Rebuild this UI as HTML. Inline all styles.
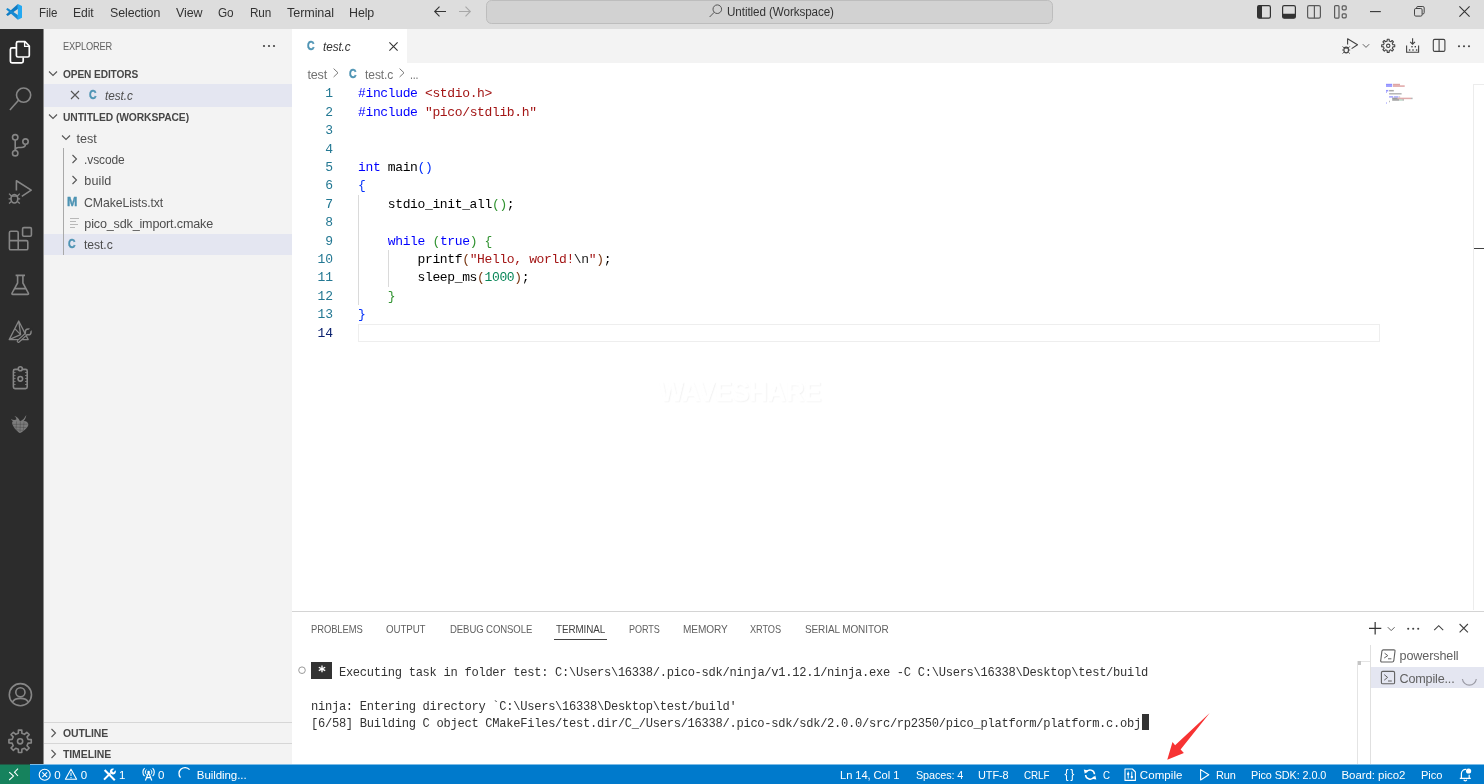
<!DOCTYPE html>
<html>
<head>
<meta charset="utf-8">
<title>test.c - Untitled (Workspace) - Visual Studio Code</title>
<style>
*{box-sizing:border-box;margin:0;padding:0}
html,body{width:1484px;height:784px;overflow:hidden;background:#fff}
body{font-family:"Liberation Sans",sans-serif;font-size:12.5px;color:#333;position:relative;will-change:transform}
.abs{position:absolute}
.t{position:absolute;white-space:pre;line-height:1}
svg{position:absolute;overflow:visible}
/* title bar */
#titlebar{left:0;top:0;width:1484px;height:29px;background:#dddddd;z-index:5}
#titlebar .m{font-size:13px;color:#333;top:6px}
#cmd{left:485.5px;top:0;width:567.5px;height:24px;background:#d2d2d2;border:1px solid #bdbdbd;border-radius:5.5px}
/* activity bar */
#activity{left:0;top:28px;width:44px;height:737px;background:#2c2c2c;border-right:1px solid #8a8a8a}
/* sidebar */
#sidebar{left:44px;top:28px;width:248px;height:737px;background:#f3f3f3}
.row{position:absolute;left:0;width:248px;height:21px}
.sel{background:#e4e6f1}
.hdr{font-weight:bold;font-size:11px;color:#474747}
.lbl{font-size:12.6px;color:#4e4e4e}
.ci{font-size:12.8px;font-weight:bold;color:#4d93b3;transform:scaleX(0.82);transform-origin:0 0;-webkit-text-stroke:0.4px #4d93b3}
/* editor */
#tabs{left:292px;top:28px;width:1192px;height:35px;background:#f3f3f3}
#tab1{left:0;top:0;width:115px;height:35px;background:#fff}
#editor{left:292px;top:63px;width:1192px;height:548px;background:#fff}
.ln{position:absolute;left:0;width:41px;text-align:right;font-family:"Liberation Mono",monospace;font-size:13px;color:#237893;line-height:18.38px;height:18.38px}
.code{position:absolute;left:66px;font-family:"Liberation Mono",monospace;font-size:13px;color:#000;white-space:pre;line-height:18.38px;height:18.38px;letter-spacing:-0.36px}
.k{color:#0000ff}.s{color:#a31515}.n{color:#098658}.b1{color:#0431fa}.b2{color:#319331}.b3{color:#7b3814}.e{color:#1a1a1a}
.bc{font-size:12.6px;color:#727272}
.cur{color:#0b216f}
/* panel */
#panel{left:292px;top:611px;width:1192px;height:154px;background:#fff}
.pt{font-size:10.7px;color:#616161;top:13.4px;margin-left:-0.5px}
.term{position:absolute;left:19px;font-family:"Liberation Mono",monospace;font-size:12.1px;color:#333;white-space:pre;line-height:17px;letter-spacing:-0.283px}
/* status */
#status{left:0;top:764px;width:1484px;height:20px;background:#007acc;color:#fff}
#status .t{font-size:11.5px;color:#fff;top:5.5px}
</style>
</head>
<body>

<!-- TITLE BAR -->
<div id="titlebar" class="abs">
  <svg style="left:5px;top:3px" width="18" height="18" viewBox="5 3 18 18">
    <polygon points="17.86,4.1 17.86,8.93 7.68,15.9 6.07,14.46" fill="#0f7cc4"/>
    <polygon points="17.86,19.8 17.86,15 7.5,8.04 6.07,9.36" fill="#1489d2"/>
    <polygon points="17.86,4.1 22,6.1 22,17.7 17.86,19.8" fill="#23a9f2"/>
  </svg>
  <span class="t m" style="letter-spacing:-0.079px;transform:scaleX(0.8867);transform-origin:0 0;left:39px">File</span>
  <span class="t m" style="letter-spacing:-0.084px;transform:scaleX(0.9334);transform-origin:0 0;left:73.3px">Edit</span>
  <span class="t m" style="letter-spacing:-0.089px;transform:scaleX(0.9529);transform-origin:0 0;left:109.7px">Selection</span>
  <span class="t m" style="letter-spacing:-0.105px;transform:scaleX(0.9588);transform-origin:0 0;left:175.5px">View</span>
  <span class="t m" style="letter-spacing:-0.130px;transform:scaleX(0.9073);transform-origin:0 0;left:218px">Go</span>
  <span class="t m" style="letter-spacing:-0.119px;transform:scaleX(0.9021);transform-origin:0 0;left:249.7px">Run</span>
  <span class="t m" style="letter-spacing:-0.092px;transform:scaleX(0.9692);transform-origin:0 0;left:286.6px">Terminal</span>
  <span class="t m" style="letter-spacing:-0.100px;transform:scaleX(0.9564);transform-origin:0 0;left:349.3px">Help</span>
  <svg style="left:434px;top:6px" width="12" height="11"><path d="M0.7 5.5 H12 M5.5 0.7 L0.7 5.5 L5.5 10.3" fill="none" stroke="#333" stroke-width="1.1"/></svg>
  <svg style="left:459.3px;top:6px" width="12" height="11"><path d="M0 5.5 H11.3 M6.5 0.7 L11.3 5.5 L6.5 10.3" fill="none" stroke="#a8a8a8" stroke-width="1.1"/></svg>
  <div id="cmd" class="abs"></div>
  <svg style="left:708.5px;top:4px" width="14" height="14"><circle cx="8.3" cy="5.2" r="4.3" fill="none" stroke="#555" stroke-width="1"/><path d="M5.2 8.3 L0.6 13" stroke="#555" stroke-width="1"/></svg>
  <span class="t" style="letter-spacing:-0.087px;transform:scaleX(0.9317);transform-origin:0 0;left:726.7px;top:5.5px;font-size:12.5px;color:#333">Untitled (Workspace)</span>
  <!-- layout controls -->
  <svg style="left:1257px;top:5.3px" width="14" height="14"><rect x="0.6" y="0.6" width="12.8" height="12.6" rx="1.6" fill="none" stroke="#333" stroke-width="1.2"/><path d="M0.6 2 Q0.6 0.6 2 0.6 H5 V13.2 H2 Q0.6 13.2 0.6 11.8 Z" fill="#333"/></svg>
  <svg style="left:1282.4px;top:5.3px" width="14" height="14"><rect x="0.6" y="0.6" width="12.8" height="12.6" rx="1.6" fill="none" stroke="#333" stroke-width="1.2"/><path d="M0.6 8.8 H13.4 V11.8 Q13.4 13.2 12 13.2 H2 Q0.6 13.2 0.6 11.8 Z" fill="#333"/></svg>
  <svg style="left:1307.2px;top:5.3px" width="14" height="14"><rect x="0.6" y="0.6" width="12.8" height="12.6" rx="1.6" fill="none" stroke="#5a5a5a" stroke-width="1.2"/><path d="M7.4 0.6 V13.2" stroke="#5a5a5a" stroke-width="1.2"/></svg>
  <svg style="left:1334px;top:5.3px" width="14" height="14"><rect x="0.6" y="0.6" width="4.4" height="12.6" rx="1" fill="none" stroke="#5a5a5a" stroke-width="1.2"/><rect x="8.2" y="0.8" width="4" height="4" rx="1" fill="none" stroke="#5a5a5a" stroke-width="1.2"/><rect x="8.2" y="8.8" width="4" height="4" rx="1" fill="none" stroke="#5a5a5a" stroke-width="1.2"/></svg>
  <!-- window controls -->
  <svg style="left:1370px;top:11px" width="11" height="2"><path d="M0 0.6 H10.8" stroke="#333" stroke-width="1.1"/></svg>
  <svg style="left:1414px;top:6.4px" width="11" height="11"><rect x="0.5" y="2.5" width="7.6" height="7.6" rx="1.3" fill="none" stroke="#444" stroke-width="1"/><path d="M2.6 2.5 V1.8 Q2.6 0.5 3.9 0.5 H8.8 Q10.2 0.5 10.2 1.9 V6.6 Q10.2 8 8.8 8 H8.2" fill="none" stroke="#444" stroke-width="1"/></svg>
  <svg style="left:1458.6px;top:6.4px" width="11" height="11"><path d="M0.4 0.4 L10.6 10.6 M10.6 0.4 L0.4 10.6" stroke="#333" stroke-width="1.1"/></svg>
</div>

<!-- ACTIVITY BAR -->
<div id="activity" class="abs">
  <!-- files (active) : abs coords minus 28 -->
  <svg style="left:0;top:0" width="44" height="737" viewBox="0 28 44 737">
    <g fill="none" stroke="#fff" stroke-width="1.7" stroke-linejoin="round">
      <path d="M16.5 47.8 H12 Q10.4 47.8 10.4 49.4 V61.3 Q10.4 62.9 12 62.9 H21.6 Q23.2 62.9 23.2 61.3 V57.6"/>
      <path d="M18 41.6 H25 L29.3 46 V55.4 Q29.3 57 27.7 57 H18 Q16.4 57 16.4 55.4 V43.2 Q16.4 41.6 18 41.6 Z"/>
      <path d="M24.6 41.8 V46.4 H29.2" stroke-width="1.3"/>
    </g>
    <g fill="none" stroke="#868686" stroke-width="1.6">
      <!-- search -->
      <circle cx="23.6" cy="95.1" r="7.1"/>
      <path d="M18.5 100.2 L9.9 110"/>
      <!-- source control -->
      <circle cx="15.2" cy="137.3" r="2.7"/>
      <circle cx="25.5" cy="141.6" r="2.7"/>
      <circle cx="15.2" cy="153.2" r="2.7"/>
      <path d="M15.2 140 V150.5"/>
      <path d="M25.5 144.3 Q25.5 147.5 21 147.5 H18.5 Q15.6 147.5 15.3 149.8"/>
      <!-- debug -->
      <path d="M16.4 190.5 V180.8 L31.2 190.1 L21.8 196.3" stroke-linejoin="round"/>
      <ellipse cx="14.4" cy="198.8" rx="3.4" ry="4.2"/>
      <path d="M11.2 196.2 H17.6 M11 198.8 H8.6 M17.8 198.8 H20.2 M11.4 196 L9 193.6 M17.4 196 L19.8 193.6 M11.4 201.6 L9 203.6 M17.4 201.6 L19.8 203.6" stroke-width="1.3"/>
      <!-- extensions -->
      <path d="M18.2 240.6 V232.7 Q18.2 231.3 16.8 231.3 H10.8 Q9.4 231.3 9.4 232.7 V248.4 Q9.4 249.8 10.8 249.8 H26.4 Q27.8 249.8 27.8 248.4 V242 Q27.8 240.6 26.4 240.6 H9.4 M18.2 240.6 V249.8"/>
      <rect x="22.6" y="227.6" width="8.8" height="8.6" rx="1.2"/>
      <!-- flask -->
      <path d="M15.6 275.4 H25 M17.6 275.6 V283 L12 293.2 Q11.6 294.4 12.8 294.4 H27.6 Q28.8 294.4 28.4 293.2 L22.9 283 V275.6 M14.3 288.6 H26.2"/>
      <!-- cmake tools -->
      <path d="M18.7 321 L9.2 339.6 H28.2 Z M18.7 321 L20.6 334.6 L9.2 339.6 M20.6 334.6 L14.8 328.6" stroke-width="1.3" stroke-linejoin="round"/>
      <path d="M18.4 341.2 L26.2 334" stroke-width="3.4" stroke-linecap="round"/><path d="M18.4 341.2 L26.4 333.8" stroke="#2c2c2c" stroke-width="1.1" stroke-linecap="round"/>
      <circle cx="28.2" cy="331.9" r="2.9" fill="#2c2c2c" stroke-width="1.4"/><path d="M28.6 331.5 L31.8 328.3" stroke="#2c2c2c" stroke-width="2.4"/><path d="M28.6 331.5 L26.2 334" stroke="#2c2c2c" stroke-width="1.1"/>
      <!-- clipboard -->
      <rect x="13.4" y="369.4" width="13.8" height="19.2" rx="1.6"/>
      <circle cx="20.3" cy="368.8" r="2" fill="#2c2c2c"/>
      <circle cx="20.3" cy="378.8" r="2.3"/>
      <path d="M13.6 372.5 h2 M13.6 375.5 h2 M13.6 378.5 h2 M13.6 381.5 h2 M13.6 384.5 h2 M27 372.5 h-2 M27 375.5 h-2 M27 378.5 h-2 M27 381.5 h-2 M27 384.5 h-2" stroke-width="0.8"/>
      <!-- account -->
      <circle cx="20.4" cy="694.7" r="11.1"/>
      <circle cx="20.4" cy="692.3" r="4.6"/>
      <path d="M12.4 702.2 Q14.2 698.4 20.4 698.4 Q26.6 698.4 28.4 702.2"/>
      <!-- gear -->
      <path d="M18.32 733.30 L18.43 730.12 L21.77 730.12 L21.88 733.30 L24.50 734.38 L26.82 732.22 L29.18 734.58 L27.02 736.90 L28.10 739.52 L31.28 739.63 L31.28 742.97 L28.10 743.08 L27.02 745.70 L29.18 748.02 L26.82 750.38 L24.50 748.22 L21.88 749.30 L21.77 752.48 L18.43 752.48 L18.32 749.30 L15.70 748.22 L13.38 750.38 L11.02 748.02 L13.18 745.70 L12.10 743.08 L8.92 742.97 L8.92 739.63 L12.10 739.52 L13.18 736.90 L11.02 734.58 L13.38 732.22 L15.70 734.38 Z" stroke-linejoin="round"/>
      <circle cx="20.1" cy="741.3" r="2.6"/>
    </g>
    <!-- raspberry -->
    <g fill="#7c7c7c" stroke="none">
      <path d="M12.1 423 Q11.8 420.9 14 420.7 L24.6 420.9 Q28.6 421.8 28.3 425 Q27.6 428.2 21.2 432.6 Q20 433.3 18.8 432.4 Q12.8 427.6 12.1 423 Z"/>
      <path d="M20 421.4 Q18.6 417.4 14.4 416 Q16.8 417.8 16.4 419.6 Q13.6 420.4 10.9 419 Q12.4 421.8 16.6 422 Z"/>
      <path d="M20.2 421.4 Q24.2 419.4 26.3 415 Q25.8 420.2 22 422 Z"/>
    </g>
    <g stroke="#2c2c2c" stroke-width="0.55" fill="none" opacity="0.5">
      <path d="M13 424.4 L27.6 424.2 M13.8 427 L26.4 427.6 M16.2 429.8 L23.6 430.4 M16.6 421.4 L16 429.6 M20.4 421.4 L20 432.4 M24 421.6 L23.4 430.4"/>
    </g>
  </svg>
</div>

<!-- SIDEBAR -->
<div id="sidebar" class="abs">
  <span class="t" style="letter-spacing:-0.213px;transform:scaleX(0.8400);transform-origin:0 0;left:19px;top:13px;font-size:11px;color:#616161">EXPLORER</span>
  <svg style="left:218px;top:16px" width="14" height="4"><circle cx="2" cy="2" r="1.1" fill="#424242"/><circle cx="7" cy="2" r="1.1" fill="#424242"/><circle cx="12" cy="2" r="1.1" fill="#424242"/></svg>
  <!-- open editors -->
  <svg style="left:4px;top:42px" width="10" height="8"><path d="M1 1.5 L5 5.5 L9 1.5" fill="none" stroke="#555" stroke-width="1.1"/></svg>
  <span class="t hdr" style="letter-spacing:-0.104px;transform:scaleX(0.9205);transform-origin:0 0;left:19px;top:41px">OPEN EDITORS</span>
  <div class="row sel" style="top:56px;height:23px"></div>
  <svg style="left:25.7px;top:62.3px" width="10" height="10"><path d="M1 1 L9 9 M9 1 L1 9" fill="none" stroke="#555" stroke-width="1.1"/></svg>
  <span class="t ci" style="left:45.2px;top:61.2px">C</span>
  <span class="t lbl" style="letter-spacing:-0.075px;transform:scaleX(0.9340);transform-origin:0 0;left:61.3px;top:61.7px;font-style:italic">test.c</span>
  <!-- workspace -->
  <svg style="left:4px;top:85px" width="10" height="8"><path d="M1 1.5 L5 5.5 L9 1.5" fill="none" stroke="#555" stroke-width="1.1"/></svg>
  <span class="t hdr" style="letter-spacing:-0.103px;transform:scaleX(0.9358);transform-origin:0 0;left:19px;top:84px">UNTITLED (WORKSPACE)</span>
  <svg style="left:17px;top:106px" width="10" height="8"><path d="M1 1.5 L5 5.5 L9 1.5" fill="none" stroke="#555" stroke-width="1.1"/></svg>
  <span class="t lbl" style="letter-spacing:-0.028px;left:32.5px;top:104.6px">test</span>
  <div class="abs" style="left:19px;top:120px;width:1px;height:107px;background:#a9a9a9"></div>
  <svg style="left:27px;top:126px" width="8" height="10"><path d="M1.5 1 L5.5 5 L1.5 9" fill="none" stroke="#555" stroke-width="1.1"/></svg>
  <span class="t lbl" style="letter-spacing:-0.093px;transform:scaleX(0.9519);transform-origin:0 0;left:40.3px;top:126px">.vscode</span>
  <svg style="left:27px;top:147px" width="8" height="10"><path d="M1.5 1 L5.5 5 L1.5 9" fill="none" stroke="#555" stroke-width="1.1"/></svg>
  <span class="t lbl" style="letter-spacing:0.118px;left:40.3px;top:147.2px">build</span>
  <span class="t" style="left:23.1px;top:166.8px;font-size:13.4px;font-weight:bold;color:#4d93b3;-webkit-text-stroke:0.4px #4d93b3;transform:scaleX(0.93);transform-origin:0 0">M</span>
  <span class="t lbl" style="letter-spacing:-0.088px;transform:scaleX(0.9735);transform-origin:0 0;left:40.3px;top:168.7px">CMakeLists.txt</span>
  <svg style="left:26px;top:190px" width="10" height="10"><path d="M0 0.5 H9 M0 3.5 H6 M0 6.5 H8 M0 9.5 H5" stroke="#b8b8b8" stroke-width="1"/></svg>
  <span class="t lbl" style="letter-spacing:-0.171px;left:40.3px;top:190px">pico_sdk_import.cmake</span>
  <div class="row sel" style="top:206px;height:21px"></div>
  <div class="abs" style="left:19px;top:206px;width:1px;height:21px;background:#a9a9a9"></div>
  <span class="t ci" style="left:23.8px;top:210.2px">C</span>
  <span class="t lbl" style="letter-spacing:-0.075px;transform:scaleX(0.9677);transform-origin:0 0;left:40.3px;top:211.2px">test.c</span>
  <!-- outline / timeline -->
  <div class="abs" style="left:0;top:694px;width:248px;height:1px;background:#d6d6d6"></div>
  <svg style="left:6px;top:700px" width="8" height="10"><path d="M1.5 1 L5.5 5 L1.5 9" fill="none" stroke="#555" stroke-width="1.1"/></svg>
  <span class="t hdr" style="letter-spacing:-0.103px;transform:scaleX(0.9483);transform-origin:0 0;left:19px;top:700px">OUTLINE</span>
  <div class="abs" style="left:0;top:715px;width:248px;height:1px;background:#d6d6d6"></div>
  <svg style="left:6px;top:721px" width="8" height="10"><path d="M1.5 1 L5.5 5 L1.5 9" fill="none" stroke="#555" stroke-width="1.1"/></svg>
  <span class="t hdr" style="letter-spacing:-0.096px;transform:scaleX(0.9511);transform-origin:0 0;left:19px;top:721px">TIMELINE</span>
</div>

<!-- TABS -->
<div id="tabs" class="abs">
  <div id="tab1" class="abs"></div>
  <span class="t ci" style="left:14.8px;top:11.9px">C</span>
  <span class="t" style="letter-spacing:-0.075px;transform:scaleX(0.9306);transform-origin:0 0;left:31px;top:12.5px;font-size:12.6px;font-style:italic;color:#333">test.c</span>
  <svg style="left:97px;top:13.8px" width="9" height="9"><path d="M0.4 0.4 L8.6 8.6 M8.6 0.4 L0.4 8.6" stroke="#333" stroke-width="1.1"/></svg>
  <!-- editor actions : coords relative to tabs (x-292, y-28) -->
  <svg style="left:0;top:0" width="1192" height="35" viewBox="292 28 1192 35">
    <g fill="none" stroke="#424242" stroke-width="1.1">
      <path d="M1347.6 44.4 V38.7 L1357.5 44.7 L1351.6 48.6" stroke-linejoin="round"/>
      <ellipse cx="1346.2" cy="50" rx="2.3" ry="2.9"/>
      <path d="M1344 48.2 H1348.4 M1343.8 50 H1342.2 M1348.6 50 H1350.2 M1344.2 48 L1342.6 46.4 M1348.2 48 L1349.8 46.4 M1344.2 52 L1342.6 53.6 M1348.2 52 L1349.8 53.6" stroke-width="0.9"/>
      <path d="M1362.8 44.2 L1366 47.4 L1369.2 44.2" stroke="#616161" stroke-width="1"/>
      <path d="M1387.16 41.11 L1387.22 39.27 L1389.18 39.27 L1389.24 41.11 L1390.78 41.75 L1392.13 40.49 L1393.51 41.87 L1392.25 43.22 L1392.89 44.76 L1394.73 44.82 L1394.73 46.78 L1392.89 46.84 L1392.25 48.38 L1393.51 49.73 L1392.13 51.11 L1390.78 49.85 L1389.24 50.49 L1389.18 52.33 L1387.22 52.33 L1387.16 50.49 L1385.62 49.85 L1384.27 51.11 L1382.89 49.73 L1384.15 48.38 L1383.51 46.84 L1381.67 46.78 L1381.67 44.82 L1383.51 44.76 L1384.15 43.22 L1382.89 41.87 L1384.27 40.49 L1385.62 41.75 Z" stroke-linejoin="round"/>
      <circle cx="1388.2" cy="45.8" r="1.7"/>
      <path d="M1406.6 45.6 V52.3 H1418.6 V45.6"/>
      <path d="M1412.6 38.2 V44.2 M1410.2 41.8 L1412.6 44.2 L1415 41.8"/>
      <rect x="1433.3" y="39.4" width="11.6" height="12" rx="1.4"/>
      <path d="M1439.1 39.4 V51.4"/>
    </g>
    <g fill="#424242">
      <rect x="1411.3" y="46" width="1.4" height="1.4"/><rect x="1414.6" y="46" width="1.4" height="1.4"/><rect x="1408.9" y="49.3" width="1.4" height="1.4"/><rect x="1412.3" y="49.3" width="1.4" height="1.4"/><rect x="1415.9" y="49.3" width="1.4" height="1.4"/>
      <circle cx="1459" cy="46.2" r="1.05"/><circle cx="1464" cy="46.2" r="1.05"/><circle cx="1469" cy="46.2" r="1.05"/>
    </g>
  </svg>
</div>

<!-- EDITOR -->
<div id="editor" class="abs">
  <span class="t bc" style="letter-spacing:-0.203px;left:15.5px;top:5.7px">test</span>
  <svg style="left:41px;top:5.4px" width="6" height="10"><path d="M0.6 0.6 L5 4.8 L0.6 9" fill="none" stroke="#7a7a7a" stroke-width="1"/></svg>
  <span class="t ci" style="left:56.7px;top:5.1px">C</span>
  <span class="t bc" style="letter-spacing:-0.075px;transform:scaleX(0.9542);transform-origin:0 0;left:73px;top:5.7px">test.c</span>
  <svg style="left:107px;top:5.4px" width="6" height="10"><path d="M0.6 0.6 L5 4.8 L0.6 9" fill="none" stroke="#7a7a7a" stroke-width="1"/></svg>
  <span class="t bc" style="letter-spacing:-0.167px;transform:scaleX(0.8400);transform-origin:0 0;left:117.5px;top:5.7px">...</span>
  <div class="abs" style="left:66px;top:260.6px;width:1022px;height:18.4px;border:1.4px solid #eeeeee"></div>
  <div class="abs" style="left:66px;top:131.8px;width:1px;height:110.4px;background:#dadada"></div>
  <div class="abs" style="left:95.6px;top:187.0px;width:1px;height:36.8px;background:#dadada"></div>
  <div class="ln" style="top:22.30px">1</div><div class="code" style="top:22.30px"><span class="k">#include</span> <span class="s">&lt;stdio.h&gt;</span></div>
  <div class="ln" style="top:40.70px">2</div><div class="code" style="top:40.70px"><span class="k">#include</span> <span class="s">"pico/stdlib.h"</span></div>
  <div class="ln" style="top:59.10px">3</div><div class="code" style="top:59.10px"></div>
  <div class="ln" style="top:77.50px">4</div><div class="code" style="top:77.50px"></div>
  <div class="ln" style="top:95.90px">5</div><div class="code" style="top:95.90px"><span class="k">int</span> main<span class="b1">()</span></div>
  <div class="ln" style="top:114.30px">6</div><div class="code" style="top:114.30px"><span class="b1">{</span></div>
  <div class="ln" style="top:132.70px">7</div><div class="code" style="top:132.70px">    stdio_init_all<span class="b2">()</span>;</div>
  <div class="ln" style="top:151.10px">8</div><div class="code" style="top:151.10px"></div>
  <div class="ln" style="top:169.50px">9</div><div class="code" style="top:169.50px">    <span class="k">while</span> <span class="b2">(</span><span class="k">true</span><span class="b2">)</span> <span class="b2">{</span></div>
  <div class="ln" style="top:187.90px">10</div><div class="code" style="top:187.90px">        printf<span class="b3">(</span><span class="s">"Hello, world!</span><span class="e">\n</span><span class="s">"</span><span class="b3">)</span>;</div>
  <div class="ln" style="top:206.30px">11</div><div class="code" style="top:206.30px">        sleep_ms<span class="b3">(</span><span class="n">1000</span><span class="b3">)</span>;</div>
  <div class="ln" style="top:224.70px">12</div><div class="code" style="top:224.70px">    <span class="b2">}</span></div>
  <div class="ln" style="top:243.10px">13</div><div class="code" style="top:243.10px"><span class="b1">}</span></div>
  <div class="ln cur" style="top:261.50px">14</div><div class="code" style="top:261.50px"></div>
  <svg style="left:0;top:0" width="1192" height="547"><rect x="1094.0" y="20.80" width="6.2" height="1.5" fill="#4a4aff" opacity="0.61"/><rect x="1101.0" y="20.80" width="7.0" height="1.5" fill="#c86464" opacity="0.58"/><rect x="1094.0" y="22.34" width="6.2" height="1.5" fill="#4a4aff" opacity="0.61"/><rect x="1101.0" y="22.34" width="11.7" height="1.5" fill="#c86464" opacity="0.58"/><rect x="1094.0" y="26.96" width="2.3" height="1.5" fill="#4a4aff" opacity="0.58"/><rect x="1097.1" y="26.96" width="4.7" height="1.5" fill="#555" opacity="0.50"/><rect x="1094.0" y="28.50" width="0.8" height="1.5" fill="#4a4aff" opacity="0.50"/><rect x="1097.1" y="30.04" width="12.5" height="1.5" fill="#555" opacity="0.43"/><rect x="1097.1" y="33.12" width="3.9" height="1.5" fill="#4a4aff" opacity="0.50"/><rect x="1101.8" y="33.12" width="4.7" height="1.5" fill="#4a4aff" opacity="0.43"/><rect x="1107.3" y="33.12" width="0.8" height="1.5" fill="#555" opacity="0.36"/><rect x="1100.2" y="34.66" width="5.5" height="1.5" fill="#555" opacity="0.58"/><rect x="1105.7" y="34.66" width="13.3" height="1.5" fill="#c86464" opacity="0.54"/><rect x="1119.0" y="34.66" width="1.6" height="1.5" fill="#555" opacity="0.43"/><rect x="1100.2" y="36.20" width="7.0" height="1.5" fill="#555" opacity="0.58"/><rect x="1107.3" y="36.20" width="3.1" height="1.5" fill="#5aa27a" opacity="0.43"/><rect x="1110.4" y="36.20" width="1.6" height="1.5" fill="#555" opacity="0.43"/><rect x="1097.1" y="37.74" width="0.8" height="1.5" fill="#555" opacity="0.50"/><rect x="1094.0" y="39.28" width="0.8" height="1.5" fill="#4a4aff" opacity="0.50"/></svg>
  <div class="abs" style="left:1181px;top:21px;width:11px;height:526px;border-left:1px solid #ececec;border-top:1px solid #ececec"></div>
  <div class="abs" style="left:1181.5px;top:184.6px;width:10.5px;height:1.5px;background:#424242"></div>
  <span class="t" style="letter-spacing:-0.287px;transform:scaleX(0.9560);transform-origin:0 0;left:367px;top:316.3px;font-size:27px;font-weight:bold;color:#fff;-webkit-text-stroke:0.8px #fff;text-shadow:1px 1px 1.5px rgba(0,0,0,0.07),0 0 1px rgba(0,0,0,0.05)">WAVESHARE</span>
</div>

<!-- PANEL -->
<div id="panel" class="abs">
  <div class="abs" style="left:0;top:0;width:1192px;height:1px;background:#d4d4d4"></div>
  <span class="t pt" style="letter-spacing:-0.111px;transform:scaleX(0.8818);transform-origin:0 0;left:19.5px">PROBLEMS</span>
  <span class="t pt" style="letter-spacing:-0.110px;transform:scaleX(0.9104);transform-origin:0 0;left:94.7px">OUTPUT</span>
  <span class="t pt" style="letter-spacing:-0.108px;transform:scaleX(0.8949);transform-origin:0 0;left:158px">DEBUG CONSOLE</span>
  <span class="t pt" style="letter-spacing:-0.101px;transform:scaleX(0.9242);transform-origin:0 0;left:264px;color:#424242">TERMINAL</span>
  <div class="abs" style="left:262.3px;top:27.5px;width:52.7px;height:1px;background:#424242"></div>
  <span class="t pt" style="letter-spacing:-0.110px;transform:scaleX(0.8482);transform-origin:0 0;left:337.7px">PORTS</span>
  <span class="t pt" style="letter-spacing:-0.120px;transform:scaleX(0.9430);transform-origin:0 0;left:391px">MEMORY</span>
  <span class="t pt" style="letter-spacing:-0.109px;transform:scaleX(0.8637);transform-origin:0 0;left:458.5px">XRTOS</span>
  <span class="t pt" style="letter-spacing:-0.097px;transform:scaleX(0.9330);transform-origin:0 0;left:513px">SERIAL MONITOR</span>
  <div class="abs" style="left:1078.6px;top:56.3px;width:113.4px;height:20.5px;background:#e4e6f1"></div>
  <!-- actions -->
  <svg style="left:0;top:0" width="1192" height="154" viewBox="292 611 1192 154">
    <g fill="none" stroke="#424242" stroke-width="1.1">
      <path d="M1369 628.3 H1381.3 M1375.15 622.1 V634.5" stroke="#333" stroke-width="1.2"/>
      <path d="M1387.8 627.2 L1391.2 630.6 L1394.6 627.2" stroke="#616161" stroke-width="1"/>
      <path d="M1434.2 630.2 L1438.7 625.7 L1443.2 630.2"/>
      <path d="M1459.6 624 L1467.9 632.3 M1467.9 624 L1459.6 632.3"/>
      <!-- circle decoration -->
      <circle cx="302" cy="670.2" r="3.3" stroke="#9a9a9a" stroke-width="1"/>
      <!-- terminal icons -->
      <g stroke="#616161" stroke-width="1.1">
        <path d="M1383.4 649.9 H1393.8 Q1395.2 649.9 1395 651.2 L1393.8 660.7 Q1393.6 662 1392.2 662 H1381.9 Q1380.5 662 1380.7 660.7 L1381.9 651.2 Q1382.1 649.9 1383.4 649.9 Z"/>
        <path d="M1384.6 653.2 L1387.8 655.6 L1384.2 658 M1388 658.8 H1391.4" stroke-width="1"/>
        <rect x="1381.4" y="671.4" width="13.2" height="12.4" rx="1.4"/>
        <path d="M1384.2 674.6 L1387.6 677.4 L1384.2 680.2 M1388 681 H1391.8" stroke-width="1"/>
      </g>
      <path d="M1462.4 679 A7 7 0 0 0 1476.3 679" stroke="#9a9aa4" stroke-width="1.2"/>
    </g>
    <g fill="#424242"><circle cx="1408.2" cy="628.8" r="1.05"/><circle cx="1413.2" cy="628.8" r="1.05"/><circle cx="1418.2" cy="628.8" r="1.05"/></g>
  </svg>
  <!-- terminal text -->
  <div class="abs" style="left:19px;top:51.2px;width:20.8px;height:16.8px;background:#333"></div>
  <svg style="left:26.2px;top:54.2px" width="8" height="8"><path d="M4 0.4 V7.2 M0.8 2.2 L7.2 5.6 M7.2 2.2 L0.8 5.6" stroke="#fff" stroke-width="1.3" fill="none"/></svg>
  <div class="term" style="top:54.2px"><span>   </span> Executing task in folder test: C:\Users\16338/.pico-sdk/ninja/v1.12.1/ninja.exe -C C:\Users\16338\Desktop\test/build</div>
  <div class="term" style="top:88.2px">ninja: Entering directory `C:\Users\16338\Desktop\test/build'</div>
  <div class="term" style="top:105.2px">[6/58] Building C object CMakeFiles/test.dir/C_/Users/16338/.pico-sdk/sdk/2.0.0/src/rp2350/pico_platform/platform.c.obj</div>
  <div class="abs" style="left:849.8px;top:102.8px;width:7px;height:16.2px;background:#333"></div>
  <!-- terminal scrollbar + list -->
  <div class="abs" style="left:1064.8px;top:50px;width:13.4px;height:104px;border-left:1px solid #e4e4e4;border-top:1px solid #e4e4e4"></div>
  <div class="abs" style="left:1065.6px;top:50.4px;width:3.4px;height:3.4px;background:#c4c4c4"></div>
  <div class="abs" style="left:1077.6px;top:34px;width:1px;height:120px;background:#e0e0e0"></div>
  <span class="t" style="letter-spacing:-0.120px;left:1107.5px;top:39.2px;font-size:12.6px;color:#616161">powershell</span>
  <span class="t" style="letter-spacing:-0.170px;left:1107.5px;top:61.5px;font-size:12.6px;color:#616161">Compile...</span>
  <!-- red arrow -->
  <svg style="left:0;top:0" width="1192" height="154" viewBox="292 611 1192 154">
    <path d="M1209.7 712.9 L1180.6 749.6 L1183.9 752.9 L1167.25 759.7 L1172.5 742 L1175.1 745.2 Z" fill="#f73333"/>
  </svg>
</div>

<!-- STATUS BAR -->
<div id="status" class="abs">
  <div class="abs" style="left:0;top:0;width:30.3px;height:20px;background:#16825d"></div>
  <div class="abs" style="left:0;top:0;width:30.3px;height:1px;background:#215744"></div>
  <div class="abs" style="left:30.3px;top:0;width:1453.7px;height:1px;background:#7cbbe6"></div>
  <svg style="left:0;top:0" width="1484" height="20" viewBox="0 764 1484 20">
    <g fill="none" stroke="#fff" stroke-width="1.1">
      <path d="M9.2 772.2 L13.5 776.1 L9.2 780 M18 768.6 L14.5 772.2 L18 776"/>
      <circle cx="44.7" cy="774.7" r="5.5"/>
      <path d="M42.3 772.3 L47.1 777.1 M47.1 772.3 L42.3 777.1"/>
      <path d="M71 769.2 L76.6 779.2 H65.4 Z" stroke-linejoin="round"/>
      <path d="M71 772.6 V776 M71 777 V778.2" stroke-width="1"/>
      <!-- tools -->
      <path d="M104.6 770 L114.8 780.2" stroke-width="2"/>
      <path d="M104 779.6 L110.4 773.2" stroke-width="2"/>
      <path d="M115.6 770.2 L113.4 772.4 L112 771 L114.2 768.8 A3 3 0 1 0 115.6 770.2 Z" fill="#fff" stroke="none"/>
      <!-- antenna -->
      <path d="M148.6 772.6 L145.4 780.4 M148.6 772.6 L151.8 780.4 M146.6 777.6 H150.6" stroke-width="1.2"/>
      <circle cx="148.6" cy="772" r="1.3" fill="#fff" stroke="none"/>
      <path d="M146.5 769.6 A3.2 3.2 0 0 0 146.5 774.6 M150.7 769.6 A3.2 3.2 0 0 1 150.7 774.6" stroke-width="1"/>
      <path d="M144.6 768.2 A5.6 5.6 0 0 0 144.6 776.2 M152.6 768.2 A5.6 5.6 0 0 1 152.6 776.2" stroke-width="1.1"/>
      <!-- spinner -->
      <path d="M180.5 777.6 A6 6 0 0 1 189.6 769.6" stroke-width="1.3"/>
      <!-- {} handled as text -->
      <!-- sync -->
      <path d="M1086.1 772.3 A4.5 4.5 0 0 1 1094.5 774.2 M1094 776.9 A4.5 4.5 0 0 1 1085.6 775" stroke-width="1.5"/>
      <path d="M1083.8 769.6 L1088.2 770.4 L1084.8 773.8 Z M1096.3 779.6 L1091.9 778.8 L1095.3 775.4 Z" fill="#fff" stroke="none"/>
      <!-- compile icon -->
      <path d="M1125 769 H1132.4 L1135.4 772 V780.4 H1125 Z" stroke-linejoin="round"/>
      <path d="M1128.2 771.6 V778.6 M1131.8 771.6 V778.6" stroke-width="1"/>
      <rect x="1127.2" y="773" width="2" height="2" fill="#fff" stroke="none"/><rect x="1130.8" y="776" width="2" height="2" fill="#fff" stroke="none"/>
      <!-- run -->
      <path d="M1200.6 769.6 L1208.8 774.8 L1200.6 780 Z" stroke-linejoin="round"/>
      <!-- bell -->
      <path d="M1459.8 778.4 H1470.8 M1461.4 778.2 V773.6 A4.2 4.2 0 0 1 1466.2 769.4 M1469.2 774.8 V778.2 M1463.8 779.8 A1.6 1.6 0 0 0 1466.8 779.8" stroke-width="1.2"/>
      <circle cx="1468.6" cy="771" r="2.6" fill="#fff" stroke="none"/>
    </g>
  </svg>
  <span class="t" style="letter-spacing:-0.006px;left:54.3px">0</span>
  <span class="t" style="letter-spacing:-0.006px;left:80.8px">0</span>
  <span class="t" style="letter-spacing:-0.006px;left:119px">1</span>
  <span class="t" style="letter-spacing:-0.006px;left:158px">0</span>
  <span class="t" style="letter-spacing:-0.065px;left:196.8px">Building...</span>
  <span class="t" style="letter-spacing:-0.078px;transform:scaleX(0.9708);transform-origin:0 0;left:840px">Ln 14, Col 1</span>
  <span class="t" style="letter-spacing:-0.085px;transform:scaleX(0.9387);transform-origin:0 0;left:915.5px">Spaces: 4</span>
  <span class="t" style="letter-spacing:-0.098px;transform:scaleX(0.9531);transform-origin:0 0;left:978.2px">UTF-8</span>
  <span class="t" style="letter-spacing:-0.113px;transform:scaleX(0.8553);transform-origin:0 0;left:1024.2px">CRLF</span>
  <span class="t" style="letter-spacing:1.572px;left:1064.6px;top:3.8px;font-size:12.2px">{}</span>
  <span class="t" style="letter-spacing:-0.812px;transform:scaleX(0.8400);transform-origin:0 0;left:1103px">C</span>
  <span class="t" style="letter-spacing:0.087px;left:1139.8px">Compile</span>
  <span class="t" style="letter-spacing:-0.106px;transform:scaleX(0.9523);transform-origin:0 0;left:1215.5px">Run</span>
  <span class="t" style="letter-spacing:-0.081px;transform:scaleX(0.9416);transform-origin:0 0;left:1251px">Pico SDK: 2.0.0</span>
  <span class="t" style="letter-spacing:-0.065px;left:1341.5px">Board: pico2</span>
  <span class="t" style="letter-spacing:-0.084px;transform:scaleX(0.9665);transform-origin:0 0;left:1421px">Pico</span>
</div>

</body>
</html>
